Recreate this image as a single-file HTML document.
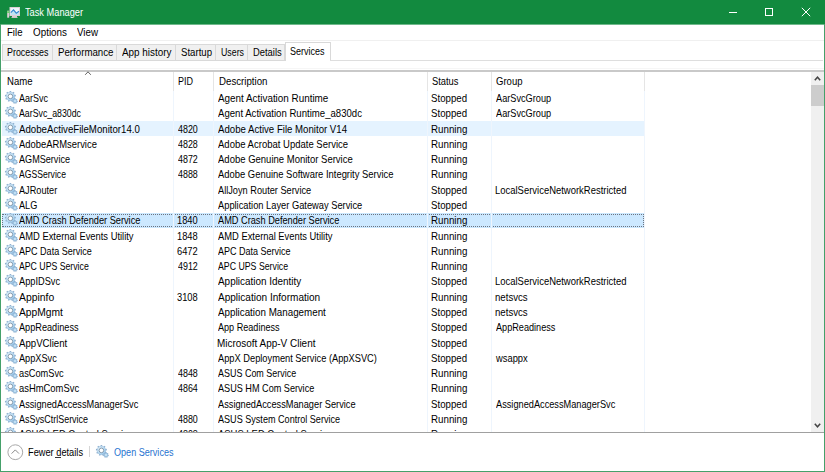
<!DOCTYPE html>
<html><head><meta charset="utf-8"><style>
*{margin:0;padding:0;box-sizing:border-box}
html,body{width:825px;height:472px;overflow:hidden;background:#fff}
body{position:relative;font-family:"Liberation Sans",sans-serif;color:#000;-webkit-text-stroke:0px currentColor}
.abs{position:absolute}
.ft{position:absolute;top:0;white-space:nowrap;transform-origin:0 0;line-height:14px}
.lay{position:absolute;left:0;width:825px;height:14px}
#bl{position:absolute;left:0;top:24px;width:1px;height:448px;background:#45a06a}
#br{position:absolute;left:824px;top:24px;width:1px;height:448px;background:#45a06a}
#bb{position:absolute;left:0;top:471px;width:825px;height:1px;background:#45a06a}
#title{position:absolute;left:0;top:0;width:825px;height:24px;box-shadow:0 1px 0 #6fb98b;background:#128a3f}
#mline{position:absolute;left:1px;top:40px;width:823px;height:1px;background:#f0f0f0}
.tab{position:absolute;top:44px;height:17px;background:#f0f0f0;border:1px solid #d9d9d9}
.tab.on{top:42px;height:19px;background:#fff;border-bottom:none}
#hline{position:absolute;left:1px;top:70px;width:823px;height:2px;background:#c9c9c9}
.hsep{position:absolute;top:72px;width:1px;height:19px;background:#e5e5e5}
.bsep{position:absolute;top:91px;width:1px;height:341px;background:#eef5fd}
#list{position:absolute;left:1px;top:91px;width:810px;height:341px;overflow:hidden}
#inner{position:absolute;left:-1px;top:-91px;width:825px;height:472px}
.row{position:absolute;left:2px;width:642px}
.row .c{position:absolute;font-size:10.5px;letter-spacing:0px;line-height:15px;white-space:nowrap;transform:scaleX(0.9);transform-origin:0 0}
.row .g{position:absolute;left:2px;top:1px}
.row .pid{transform:scaleX(0.85)}
.hov{background:#e5f3ff}
.sel{background:#cce8ff}
.sel .fr{position:absolute;left:0;right:0;top:1px;bottom:1px;border:1px dotted #6c7480}
#sb{position:absolute;left:811px;top:72px;width:13px;height:360px;background:#f0f0f0}
#thumb{position:absolute;left:0;top:13px;width:13px;height:21px;background:#cdcdcd}
#fline{position:absolute;left:1px;top:432px;width:823px;height:1px;background:#a0a0a0}
</style></head><body>
<svg width="0" height="0" style="position:absolute"><defs><linearGradient id="gg" x1="0" y1="0" x2="1" y2="1"><stop offset="0" stop-color="#e6f5fd"/><stop offset="1" stop-color="#8fc3ea"/></linearGradient>
<g id="gear">
 <g fill="#8eafcf"><rect x="-0.75" y="-5.50" width="1.50" height="5.50" transform="translate(6.4,5.4) rotate(0.0)"/><rect x="-0.75" y="-5.50" width="1.50" height="5.50" transform="translate(6.4,5.4) rotate(40.0)"/><rect x="-0.75" y="-5.50" width="1.50" height="5.50" transform="translate(6.4,5.4) rotate(80.0)"/><rect x="-0.75" y="-5.50" width="1.50" height="5.50" transform="translate(6.4,5.4) rotate(120.0)"/><rect x="-0.75" y="-5.50" width="1.50" height="5.50" transform="translate(6.4,5.4) rotate(160.0)"/><rect x="-0.75" y="-5.50" width="1.50" height="5.50" transform="translate(6.4,5.4) rotate(200.0)"/><rect x="-0.75" y="-5.50" width="1.50" height="5.50" transform="translate(6.4,5.4) rotate(240.0)"/><rect x="-0.75" y="-5.50" width="1.50" height="5.50" transform="translate(6.4,5.4) rotate(280.0)"/><rect x="-0.75" y="-5.50" width="1.50" height="5.50" transform="translate(6.4,5.4) rotate(320.0)"/></g>
 <circle cx="6.4" cy="5.4" r="4.3" fill="url(#gg)" stroke="#93b4d3" stroke-width="0.5"/>
 <circle cx="6.4" cy="5.4" r="2.3" fill="#fff" stroke="#74889c" stroke-width="0.8"/>
 <g fill="#8eafcf"><rect x="-0.55" y="-2.70" width="1.10" height="2.70" transform="translate(11.0,10.0) rotate(0.0)"/><rect x="-0.55" y="-2.70" width="1.10" height="2.70" transform="translate(11.0,10.0) rotate(51.4)"/><rect x="-0.55" y="-2.70" width="1.10" height="2.70" transform="translate(11.0,10.0) rotate(102.9)"/><rect x="-0.55" y="-2.70" width="1.10" height="2.70" transform="translate(11.0,10.0) rotate(154.3)"/><rect x="-0.55" y="-2.70" width="1.10" height="2.70" transform="translate(11.0,10.0) rotate(205.7)"/><rect x="-0.55" y="-2.70" width="1.10" height="2.70" transform="translate(11.0,10.0) rotate(257.1)"/><rect x="-0.55" y="-2.70" width="1.10" height="2.70" transform="translate(11.0,10.0) rotate(308.6)"/></g>
 <circle cx="11.0" cy="10.0" r="2.0" fill="#a9d2ef" stroke="#86a9ca" stroke-width="0.5"/>
 <circle cx="11.0" cy="10.0" r="0.8" fill="#dff0fb"/>
</g></defs></svg>
<div id="title">
 <svg class="abs" style="left:6px;top:6px" width="16" height="14" viewBox="0 0 16 14">
  <rect x="4" y="1.5" width="9.5" height="8" fill="#eef6fb" stroke="#dcd0d6" stroke-width="1"/>
  <path d="M4.5 7.8L4.5 9H13V6L10.3 7.6L7.5 4.3L5 6.8Z" fill="#bfe3f3"/><path d="M4.8 6.6L7.5 3.9L10.3 7.2L13 5.2" fill="none" stroke="#2e86d0" stroke-width="1.1"/>
  <rect x="6" y="10" width="5" height="1" fill="#d8ccd2"/>
  <rect x="5.5" y="11" width="6" height="1" fill="#d0c4ca"/>
  <rect x="1.2" y="4.7" width="2" height="7" fill="#dccfd6"/>
  <rect x="1.2" y="5.3" width="2" height="1.6" fill="#5fd35f"/>
 </svg>
 <div class="lay" style="top:6px;color:#fff"><span class="ft" style="left:24.5px;font-size:10px;letter-spacing:0px;transform:scaleX(0.9234);">Task Manager</span></div>
 <div class="abs" style="left:729px;top:12px;width:8px;height:1px;background:#fff"></div>
 <div class="abs" style="left:765px;top:8px;width:8px;height:8px;border:1px solid #fff"></div>
 <svg class="abs" style="left:801px;top:7px" width="10" height="10" viewBox="0 0 10 10"><path d="M0.8 0.8L9.2 9.2M9.2 0.8L0.8 9.2" stroke="#fff" stroke-width="1"/></svg>
</div>
<div class="lay" style="top:26px"><span class="ft" style="left:6.5px;font-size:10px;letter-spacing:0px;transform:scaleX(0.9612);">File</span><span class="ft" style="left:32.5px;font-size:10px;letter-spacing:0px;transform:scaleX(0.9864);">Options</span><span class="ft" style="left:77px;font-size:10px;letter-spacing:0px;transform:scaleX(0.9767);">View</span></div>
<div id="mline"></div>
<div class="tab" style="left:2px;width:51px"></div>
<div class="tab" style="left:52px;width:65px"></div>
<div class="tab" style="left:116px;width:60px"></div>
<div class="tab" style="left:175px;width:41px"></div>
<div class="tab" style="left:215px;width:33px"></div>
<div class="tab" style="left:247px;width:38px"></div>
<div class="tab on" style="left:285px;width:46px"></div>
<div class="lay" style="top:46px"><span class="ft" style="left:7.3px;font-size:10px;letter-spacing:0px;transform:scaleX(0.8889);">Processes</span><span class="ft" style="left:57.5px;font-size:10px;letter-spacing:0px;transform:scaleX(0.9694);">Performance</span><span class="ft" style="left:122px;font-size:10px;letter-spacing:0px;transform:scaleX(0.9894);">App history</span><span class="ft" style="left:180.7px;font-size:10px;letter-spacing:0px;transform:scaleX(0.9612);">Startup</span><span class="ft" style="left:221px;font-size:10px;letter-spacing:0px;transform:scaleX(0.8804);">Users</span><span class="ft" style="left:253.3px;font-size:10px;letter-spacing:0px;transform:scaleX(0.9386);">Details</span></div>
<div class="lay" style="top:45px"><span class="ft" style="left:290.3px;font-size:10px;letter-spacing:0px;transform:scaleX(0.8994);">Services</span></div>
<div class="abs" style="left:330px;top:60px;width:493px;height:1px;background:#dedede"></div>
<div class="abs" style="left:1px;top:68px;width:823px;height:1px;background:#f6f6f6"></div>
<div id="hline"></div>
<svg class="abs" style="left:84px;top:70px" width="8" height="6" viewBox="0 0 8 6"><path d="M1.2 4.8L4 1.8L6.8 4.8" fill="none" stroke="#606060" stroke-width="1"/></svg>
<div class="lay" style="top:75px"><span class="ft" style="left:6.7px;font-size:10px;letter-spacing:0px;transform:scaleX(0.9555);">Name</span><span class="ft" style="left:178px;font-size:10px;letter-spacing:0px;transform:scaleX(0.8997);">PID</span><span class="ft" style="left:218.5px;font-size:10px;letter-spacing:0px;transform:scaleX(0.9694);">Description</span><span class="ft" style="left:432px;font-size:10px;letter-spacing:0px;transform:scaleX(0.9344);">Status</span><span class="ft" style="left:496.3px;font-size:10px;letter-spacing:0px;transform:scaleX(0.9533);">Group</span></div>
<div id="list"><div id="inner">
<div class="row" style="top:90px;height:16px"><svg class="g" style="top:1px" width="16" height="15" viewBox="0 0 16 15"><use href="#gear"/></svg><span class="c" style="top:1px;left:17.00px;transform:scaleX(0.8545)">AarSvc</span><span class="c" style="top:1px;left:216.20px;transform:scaleX(0.9402)">Agent Activation Runtime</span><span class="c" style="top:1px;left:429.28px;transform:scaleX(0.9211)">Stopped</span><span class="c" style="top:1px;left:494.00px;transform:scaleX(0.8746)">AarSvcGroup</span></div><div class="row" style="top:106px;height:15px"><svg class="g" style="top:0px" width="16" height="15" viewBox="0 0 16 15"><use href="#gear"/></svg><span class="c" style="top:0px;left:17.00px;transform:scaleX(0.8351)">AarSvc_a830dc</span><span class="c" style="top:0px;left:216.20px;transform:scaleX(0.9134)">Agent Activation Runtime_a830dc</span><span class="c" style="top:0px;left:429.28px;transform:scaleX(0.9211)">Stopped</span><span class="c" style="top:0px;left:494.00px;transform:scaleX(0.8746)">AarSvcGroup</span></div><div class="row hov" style="top:121px;height:15px"><svg class="g" style="top:1px" width="16" height="15" viewBox="0 0 16 15"><use href="#gear"/></svg><span class="c" style="top:1px;left:17.00px;transform:scaleX(0.9206)">AdobeActiveFileMonitor14.0</span><span class="c" style="top:1px;left:175.80px;transform:scaleX(0.8478)">4820</span><span class="c" style="top:1px;left:216.20px;transform:scaleX(0.9171)">Adobe Active File Monitor V14</span><span class="c" style="top:1px;left:429.27px;transform:scaleX(0.9289)">Running</span></div><div class="row" style="top:136px;height:16px"><svg class="g" style="top:1px" width="16" height="15" viewBox="0 0 16 15"><use href="#gear"/></svg><span class="c" style="top:1px;left:17.00px;transform:scaleX(0.8954)">AdobeARMservice</span><span class="c" style="top:1px;left:175.80px;transform:scaleX(0.8478)">4828</span><span class="c" style="top:1px;left:216.20px;transform:scaleX(0.9056)">Adobe Acrobat Update Service</span><span class="c" style="top:1px;left:429.27px;transform:scaleX(0.9289)">Running</span></div><div class="row" style="top:152px;height:15px"><svg class="g" style="top:0px" width="16" height="15" viewBox="0 0 16 15"><use href="#gear"/></svg><span class="c" style="top:0px;left:17.00px;transform:scaleX(0.8661)">AGMService</span><span class="c" style="top:0px;left:175.80px;transform:scaleX(0.8478)">4872</span><span class="c" style="top:0px;left:216.20px;transform:scaleX(0.9054)">Adobe Genuine Monitor Service</span><span class="c" style="top:0px;left:429.27px;transform:scaleX(0.9289)">Running</span></div><div class="row" style="top:167px;height:15px"><svg class="g" style="top:0px" width="16" height="15" viewBox="0 0 16 15"><use href="#gear"/></svg><span class="c" style="top:0px;left:17.00px;transform:scaleX(0.8211)">AGSService</span><span class="c" style="top:0px;left:175.80px;transform:scaleX(0.8478)">4888</span><span class="c" style="top:0px;left:216.20px;transform:scaleX(0.8974)">Adobe Genuine Software Integrity Service</span><span class="c" style="top:0px;left:429.27px;transform:scaleX(0.9289)">Running</span></div><div class="row" style="top:182px;height:15px"><svg class="g" style="top:1px" width="16" height="15" viewBox="0 0 16 15"><use href="#gear"/></svg><span class="c" style="top:1px;left:17.00px;transform:scaleX(0.8727)">AJRouter</span><span class="c" style="top:1px;left:216.20px;transform:scaleX(0.8774)">AllJoyn Router Service</span><span class="c" style="top:1px;left:429.28px;transform:scaleX(0.9211)">Stopped</span><span class="c" style="top:1px;left:493.10px;transform:scaleX(0.9007)">LocalServiceNetworkRestricted</span></div><div class="row" style="top:197px;height:16px"><svg class="g" style="top:1px" width="16" height="15" viewBox="0 0 16 15"><use href="#gear"/></svg><span class="c" style="top:1px;left:17.00px;transform:scaleX(0.8700)">ALG</span><span class="c" style="top:1px;left:216.20px;transform:scaleX(0.8859)">Application Layer Gateway Service</span><span class="c" style="top:1px;left:429.28px;transform:scaleX(0.9211)">Stopped</span></div><div class="row sel" style="top:213px;height:15px"><div class="fr"></div><svg class="g" style="top:0px" width="16" height="15" viewBox="0 0 16 15"><use href="#gear"/></svg><span class="c" style="top:0px;left:17.00px;transform:scaleX(0.8775)">AMD Crash Defender Service</span><span class="c" style="top:0px;left:174.91px;transform:scaleX(0.8864)">1840</span><span class="c" style="top:0px;left:216.20px;transform:scaleX(0.8768)">AMD Crash Defender Service</span><span class="c" style="top:0px;left:429.27px;transform:scaleX(0.9289)">Running</span></div><div class="row" style="top:228px;height:15px"><svg class="g" style="top:1px" width="16" height="15" viewBox="0 0 16 15"><use href="#gear"/></svg><span class="c" style="top:1px;left:17.00px;transform:scaleX(0.8922)">AMD External Events Utility</span><span class="c" style="top:1px;left:174.91px;transform:scaleX(0.8864)">1848</span><span class="c" style="top:1px;left:216.20px;transform:scaleX(0.8914)">AMD External Events Utility</span><span class="c" style="top:1px;left:429.27px;transform:scaleX(0.9289)">Running</span></div><div class="row" style="top:243px;height:16px"><svg class="g" style="top:1px" width="16" height="15" viewBox="0 0 16 15"><use href="#gear"/></svg><span class="c" style="top:1px;left:17.00px;transform:scaleX(0.8607)">APC Data Service</span><span class="c" style="top:1px;left:174.91px;transform:scaleX(0.8864)">6472</span><span class="c" style="top:1px;left:216.20px;transform:scaleX(0.8583)">APC Data Service</span><span class="c" style="top:1px;left:429.27px;transform:scaleX(0.9289)">Running</span></div><div class="row" style="top:259px;height:15px"><svg class="g" style="top:0px" width="16" height="15" viewBox="0 0 16 15"><use href="#gear"/></svg><span class="c" style="top:0px;left:17.00px;transform:scaleX(0.8298)">APC UPS Service</span><span class="c" style="top:0px;left:175.80px;transform:scaleX(0.8478)">4912</span><span class="c" style="top:0px;left:216.20px;transform:scaleX(0.8345)">APC UPS Service</span><span class="c" style="top:0px;left:429.27px;transform:scaleX(0.9289)">Running</span></div><div class="row" style="top:274px;height:15px"><svg class="g" style="top:0px" width="16" height="15" viewBox="0 0 16 15"><use href="#gear"/></svg><span class="c" style="top:0px;left:17.00px;transform:scaleX(0.8783)">AppIDSvc</span><span class="c" style="top:0px;left:216.20px;transform:scaleX(0.9443)">Application Identity</span><span class="c" style="top:0px;left:429.28px;transform:scaleX(0.9211)">Stopped</span><span class="c" style="top:0px;left:493.10px;transform:scaleX(0.9007)">LocalServiceNetworkRestricted</span></div><div class="row" style="top:289px;height:15px"><svg class="g" style="top:1px" width="16" height="15" viewBox="0 0 16 15"><use href="#gear"/></svg><span class="c" style="top:1px;left:17.00px;transform:scaleX(0.9886)">Appinfo</span><span class="c" style="top:1px;left:174.91px;transform:scaleX(0.8864)">3108</span><span class="c" style="top:1px;left:216.20px;transform:scaleX(0.9566)">Application Information</span><span class="c" style="top:1px;left:429.27px;transform:scaleX(0.9289)">Running</span><span class="c" style="top:1px;left:493.08px;transform:scaleX(0.9176)">netsvcs</span></div><div class="row" style="top:304px;height:16px"><svg class="g" style="top:1px" width="16" height="15" viewBox="0 0 16 15"><use href="#gear"/></svg><span class="c" style="top:1px;left:17.00px;transform:scaleX(0.9778)">AppMgmt</span><span class="c" style="top:1px;left:216.20px;transform:scaleX(0.9328)">Application Management</span><span class="c" style="top:1px;left:429.28px;transform:scaleX(0.9211)">Stopped</span><span class="c" style="top:1px;left:493.08px;transform:scaleX(0.9176)">netsvcs</span></div><div class="row" style="top:320px;height:15px"><svg class="g" style="top:0px" width="16" height="15" viewBox="0 0 16 15"><use href="#gear"/></svg><span class="c" style="top:0px;left:17.00px;transform:scaleX(0.8721)">AppReadiness</span><span class="c" style="top:0px;left:216.20px;transform:scaleX(0.8648)">App Readiness</span><span class="c" style="top:0px;left:429.28px;transform:scaleX(0.9211)">Stopped</span><span class="c" style="top:0px;left:494.00px;transform:scaleX(0.8691)">AppReadiness</span></div><div class="row" style="top:335px;height:15px"><svg class="g" style="top:1px" width="16" height="15" viewBox="0 0 16 15"><use href="#gear"/></svg><span class="c" style="top:1px;left:17.00px;transform:scaleX(0.9192)">AppVClient</span><span class="c" style="top:1px;left:215.25px;transform:scaleX(0.9476)">Microsoft App-V Client</span><span class="c" style="top:1px;left:429.28px;transform:scaleX(0.9211)">Stopped</span></div><div class="row" style="top:350px;height:16px"><svg class="g" style="top:1px" width="16" height="15" viewBox="0 0 16 15"><use href="#gear"/></svg><span class="c" style="top:1px;left:17.00px;transform:scaleX(0.8744)">AppXSvc</span><span class="c" style="top:1px;left:216.20px;transform:scaleX(0.8838)">AppX Deployment Service (AppXSVC)</span><span class="c" style="top:1px;left:429.28px;transform:scaleX(0.9211)">Stopped</span><span class="c" style="top:1px;left:494.00px;transform:scaleX(0.8914)">wsappx</span></div><div class="row" style="top:366px;height:15px"><svg class="g" style="top:0px" width="16" height="15" viewBox="0 0 16 15"><use href="#gear"/></svg><span class="c" style="top:0px;left:17.00px;transform:scaleX(0.8800)">asComSvc</span><span class="c" style="top:0px;left:175.80px;transform:scaleX(0.8478)">4848</span><span class="c" style="top:0px;left:216.20px;transform:scaleX(0.8538)">ASUS Com Service</span><span class="c" style="top:0px;left:429.27px;transform:scaleX(0.9289)">Running</span></div><div class="row" style="top:381px;height:15px"><svg class="g" style="top:0px" width="16" height="15" viewBox="0 0 16 15"><use href="#gear"/></svg><span class="c" style="top:0px;left:17.00px;transform:scaleX(0.8955)">asHmComSvc</span><span class="c" style="top:0px;left:175.80px;transform:scaleX(0.8478)">4864</span><span class="c" style="top:0px;left:216.20px;transform:scaleX(0.8685)">ASUS HM Com Service</span><span class="c" style="top:0px;left:429.27px;transform:scaleX(0.9289)">Running</span></div><div class="row" style="top:396px;height:15px"><svg class="g" style="top:1px" width="16" height="15" viewBox="0 0 16 15"><use href="#gear"/></svg><span class="c" style="top:1px;left:17.00px;transform:scaleX(0.8772)">AssignedAccessManagerSvc</span><span class="c" style="top:1px;left:216.20px;transform:scaleX(0.8795)">AssignedAccessManager Service</span><span class="c" style="top:1px;left:429.28px;transform:scaleX(0.9211)">Stopped</span><span class="c" style="top:1px;left:494.00px;transform:scaleX(0.8772)">AssignedAccessManagerSvc</span></div><div class="row" style="top:411px;height:16px"><svg class="g" style="top:1px" width="16" height="15" viewBox="0 0 16 15"><use href="#gear"/></svg><span class="c" style="top:1px;left:17.00px;transform:scaleX(0.8506)">AsSysCtrlService</span><span class="c" style="top:1px;left:175.80px;transform:scaleX(0.8478)">4880</span><span class="c" style="top:1px;left:216.20px;transform:scaleX(0.8645)">ASUS System Control Service</span><span class="c" style="top:1px;left:429.27px;transform:scaleX(0.9289)">Running</span></div><div class="row" style="top:427px;height:15px"><svg class="g" style="top:0px" width="16" height="15" viewBox="0 0 16 15"><use href="#gear"/></svg><span class="c" style="top:0px;left:17.00px;transform:scaleX(0.9000)">ASUS LED Control Service</span><span class="c" style="top:0px;left:175.80px;transform:scaleX(0.8478)">4808</span><span class="c" style="top:0px;left:216.20px;transform:scaleX(0.9000)">ASUS LED Control Service</span><span class="c" style="top:0px;left:429.27px;transform:scaleX(0.9289)">Running</span></div>
</div></div>
<div class="hsep" style="left:173px"></div><div class="bsep" style="left:173px"></div><div class="hsep" style="left:213px"></div><div class="bsep" style="left:213px"></div><div class="hsep" style="left:427px"></div><div class="bsep" style="left:427px"></div><div class="hsep" style="left:491px"></div><div class="bsep" style="left:491px"></div><div class="hsep" style="left:644px"></div><div class="bsep" style="left:644px"></div>
<div id="sb">
 <svg class="abs" style="left:3px;top:4px" width="7" height="5" viewBox="0 0 7 5"><path d="M0.8 4.2L3.5 1.2L6.2 4.2" fill="none" stroke="#444" stroke-width="1.5"/></svg>
 <div id="thumb"></div>
 <svg class="abs" style="left:3px;top:351px" width="7" height="5" viewBox="0 0 7 5"><path d="M0.8 0.8L3.5 3.8L6.2 0.8" fill="none" stroke="#444" stroke-width="1.5"/></svg>
</div>
<div id="fline"></div>
<svg class="abs" style="left:6.5px;top:443.5px" width="17" height="17" viewBox="0 0 17 17"><circle cx="8.3" cy="8.2" r="7.4" fill="none" stroke="#a8a8a8" stroke-width="1"/><path d="M4.6 9.6L8.3 5.9L12 9.6" fill="none" stroke="#8a8a8a" stroke-width="1"/></svg>
<div class="lay" style="top:446px"><span class="ft" style="left:28px;font-size:10px;letter-spacing:0px;transform:scaleX(0.9249);">Fewer details</span></div>
<div class="abs" style="left:55px;top:457px;width:6px;height:1px;background:#333"></div>
<div class="abs" style="left:89px;top:446px;width:1px;height:11px;background:#d6d6d6"></div>
<svg class="abs" style="left:94.5px;top:444.5px" width="16" height="15" viewBox="0 0 16 15"><use href="#gear"/></svg>
<div class="lay" style="top:446px;color:#1f73d0"><span class="ft" style="left:113.5px;font-size:10px;letter-spacing:0px;transform:scaleX(0.9071);">Open Services</span></div>
<div id="bl"></div><div id="br"></div><div id="bb"></div>
</body></html>
